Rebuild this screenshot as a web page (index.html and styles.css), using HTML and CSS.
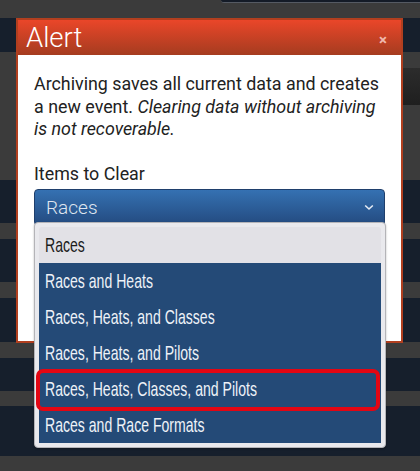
FILE: index.html
```html
<!DOCTYPE html>
<html>
<head>
<meta charset="utf-8">
<link rel="stylesheet" href="styles.css">
</head>
<body>
<div class="page">
  <div class="strip gray s-top"><div class="topbar"></div></div>
  <div class="strip navy h34"></div>
  <div class="strip gray h128"><div class="sidebtn"></div></div>
  <div class="strip navy h43"></div>
  <div class="strip gray h16"></div>
  <div class="strip navy h43"></div>
  <div class="strip gray h16"></div>
  <div class="strip navy h44"></div>
  <div class="strip gray h16"></div>
  <div class="strip navy h33"></div>
  <div class="strip gray h15"></div>
  <div class="strip navy h50"></div>
  <div class="strip gray h16"></div>
</div>

<div class="modal">
  <div class="modal-head">
    <span class="modal-title">Alert</span>
    <span class="close">×</span>
  </div>
  <div class="modal-body">
    <p class="msg"><span>Archiving saves all current data and creates</span> <span>a new event.</span> <em>Clearing data without archiving</em> <em>is not recoverable.</em></p>
    <div class="label">Items to Clear</div>
    <div class="select">
      <span class="select-val">Races</span>
      <svg class="chev" width="10" height="7" viewBox="0 0 10 7"><path d="M1.2 1.5 L5 5 L8.8 1.5" fill="none" stroke="#e6ecf5" stroke-width="1.6"/></svg>
    </div>
  </div>
</div>

<div class="options">
  <div class="opt first"><span>Races</span></div>
  <div class="opt"><span>Races and Heats</span></div>
  <div class="opt"><span>Races, Heats, and Classes</span></div>
  <div class="opt"><span>Races, Heats, and Pilots</span></div>
  <div class="opt"><span>Races, Heats, Classes, and Pilots</span></div>
  <div class="opt"><span>Races and Race Formats</span></div>
  <div class="highlight"></div>
</div>
</body>
</html>
```

FILE: styles.css
```css
html, body {
  margin: 0;
  padding: 0;
  width: 420px;
  height: 471px;
  overflow: hidden;
  background: #3b3b3b;
}

.page {
  display: flex;
  flex-direction: column;
}

.strip { position: relative; }
.gray { background: #3b3b3b; }
.navy { background: #161f2c; }
.s-top { height: 18px; }
.h34 { height: 34px; }
.h128 { height: 128px; }
.h43 { height: 43px; }
.h44 { height: 44px; }
.h16 { height: 16px; }
.h15 { height: 15px; }
.h33 { height: 33px; }
.h50 { height: 50px; }

.topbar {
  margin-left: 221px;
  height: 2px;
  background: #141b27;
  border-bottom: 1px solid #555a63;
  border-bottom-left-radius: 3px;
}

.sidebtn {
  margin-top: 16px;
  margin-left: 400px;
  height: 37px;
  background: linear-gradient(#2c2c2c, #1f1f1f);
}

.modal {
  position: absolute;
  left: 16px;
  top: 18px;
  width: 383px;
  height: 321px;
  border: 2px solid #b13f1f;
  background: #fff;
  font-family: Roboto, "Liberation Sans", sans-serif;
}

.modal-head {
  height: 35px;
  background: linear-gradient(#ea4629, #a53c20);
  display: flex;
  align-items: center;
  justify-content: space-between;
  padding: 0 14px 0 8px;
}

.modal-title {
  color: #fff;
  font-size: 27.5px;
  font-weight: 300;
  line-height: 35px;
}

.close {
  color: #f0b9ad;
  font-size: 15px;
  font-weight: 700;
  margin-top: 4px;
}

.modal-body {
  padding: 18px 16px 0 16px;
}

.msg {
  margin: 0;
  font-size: 17.85px;
  line-height: 22.5px;
  color: #222;
}

.label {
  margin-top: 22px;
  font-size: 17.85px;
  line-height: 22px;
  color: #222;
}

.select {
  margin-top: 4px;
  height: 37px;
  width: 351px;
  box-sizing: border-box;
  border-radius: 4px;
  background: linear-gradient(#3571b2, #234a7f);
  border: 1px solid #1f3f6c;
  display: flex;
  align-items: center;
  justify-content: space-between;
  padding: 0 10px 0 11px;
}

.select-val {
  color: #dfe5ef;
  font-size: 19px;
  font-weight: 300;
}

.options {
  position: absolute;
  left: 34px;
  top: 222px;
  width: 352px;
  box-sizing: border-box;
  padding: 4px 4px 4px 4px;
  background: #e9e9ed;
  border: 1px solid #b4b4b8;
  border-radius: 4px;
  box-shadow: 0 1px 2px rgba(0,0,0,0.3);
  display: flex;
  flex-direction: column;
}

.opt {
  height: 36px;
  background: #244a77;
  display: flex;
  align-items: center;
  padding-left: 6px;
  color: #eef2f7;
  font-family: "Liberation Sans Narrow", "Liberation Sans", sans-serif;
  font-size: 21px;
  overflow: hidden;
  white-space: nowrap;
}

.opt span {
  display: inline-block;
  transform: scaleX(0.67);
  transform-origin: left center;
}

.opt.first {
  background: #e2e1e6;
  color: #1c1c1c;
  border-radius: 3px 3px 0 0;
}

.opt:last-of-type { border-radius: 0 0 3px 3px; }

.highlight {
  position: absolute;
  left: 1px;
  top: 146px;
  width: 344px;
  height: 42px;
  box-sizing: border-box;
  border: 4px solid #e30613;
  border-radius: 7px;
}
```
